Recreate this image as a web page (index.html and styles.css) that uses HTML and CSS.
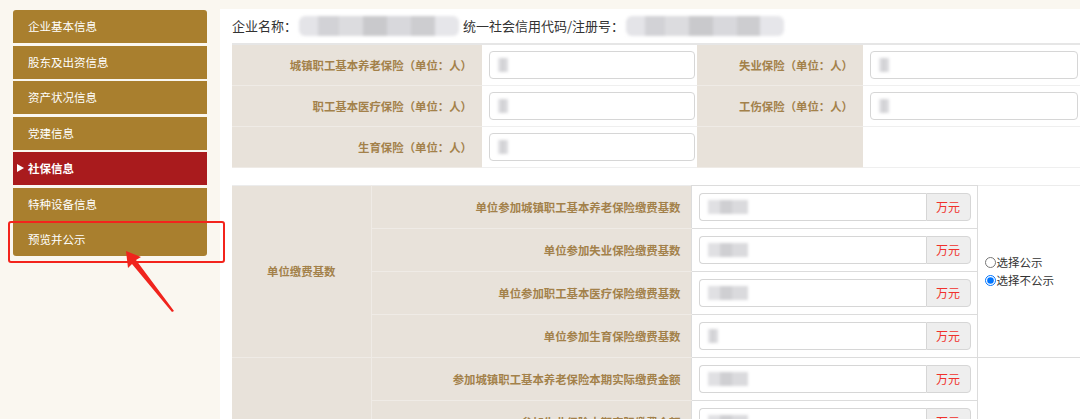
FILE: index.html
```html
<!DOCTYPE html>
<html lang="zh-CN">
<head>
    <meta charset="UTF-8">
    <title>社保信息</title>
    <link rel="stylesheet" href="styles.css">
</head>
<body>
    <div class="sidebar">
        <ul class="menu">
            <li class="menu-item first">企业基本信息</li>
            <li class="menu-item">股东及出资信息</li>
            <li class="menu-item">资产状况信息</li>
            <li class="menu-item">党建信息</li>
            <li class="menu-item active">社保信息</li>
            <li class="menu-item">特种设备信息</li>
            <li class="menu-item last">预览并公示</li>
        </ul>

        <!-- 标注 -->
        <div class="mark-box"></div>
        <svg class="mark-arrow" width="60" height="70" viewBox="0 0 60 70">
            <polygon points="4,2 19,8 14,11 52,62 50,63 10,15 6,19" fill="#f0241d"/>
        </svg>
    </div>

    <div class="main">
        <div class="company-title">
            企业名称：<span class="blur-text w1"></span>统一社会信用代码/注册号：<span class="blur-text w2"></span>
        </div>

        <table class="info-table">
            <colgroup>
                <col style="width:250px">
                <col style="width:215px">
                <col style="width:166px">
                <col>
            </colgroup>
            <tr>
                <td class="label">城镇职工基本养老保险（单位：人）</td>
                <td class="value"><div class="text-input"><span class="blur-val short"></span></div></td>
                <td class="label">失业保险（单位：人）</td>
                <td class="value"><div class="text-input"><span class="blur-val short"></span></div></td>
            </tr>
            <tr>
                <td class="label">职工基本医疗保险（单位：人）</td>
                <td class="value"><div class="text-input"><span class="blur-val short"></span></div></td>
                <td class="label">工伤保险（单位：人）</td>
                <td class="value"><div class="text-input"><span class="blur-val short"></span></div></td>
            </tr>
            <tr>
                <td class="label">生育保险（单位：人）</td>
                <td class="value"><div class="text-input"><span class="blur-val short"></span></div></td>
                <td class="label"></td>
                <td class="value"></td>
            </tr>
        </table>

        <table class="pay-table">
            <colgroup>
                <col style="width:139px">
                <col style="width:320px">
                <col style="width:286px">
                <col>
            </colgroup>
            <tr>
                <td class="label group" rowspan="4">单位缴费基数</td>
                <td class="label">单位参加城镇职工基本养老保险缴费基数</td>
                <td class="amount"><div class="input-group"><div class="text-input"><span class="blur-val"></span></div><span class="addon">万元</span></div></td>
                <td class="choice" rowspan="4">
                    <label class="radio"><input type="radio" name="pub1">选择公示</label>
                    <label class="radio"><input type="radio" name="pub1" checked>选择不公示</label>
                </td>
            </tr>
            <tr>
                <td class="label">单位参加失业保险缴费基数</td>
                <td class="amount"><div class="input-group"><div class="text-input"><span class="blur-val"></span></div><span class="addon">万元</span></div></td>
            </tr>
            <tr>
                <td class="label">单位参加职工基本医疗保险缴费基数</td>
                <td class="amount"><div class="input-group"><div class="text-input"><span class="blur-val"></span></div><span class="addon">万元</span></div></td>
            </tr>
            <tr>
                <td class="label">单位参加生育保险缴费基数</td>
                <td class="amount"><div class="input-group"><div class="text-input"><span class="blur-val short"></span></div><span class="addon">万元</span></div></td>
            </tr>
            <tr>
                <td class="label group" rowspan="2"></td>
                <td class="label">参加城镇职工基本养老保险本期实际缴费金额</td>
                <td class="amount"><div class="input-group"><div class="text-input"><span class="blur-val"></span></div><span class="addon">万元</span></div></td>
                <td class="choice" rowspan="2"></td>
            </tr>
            <tr>
                <td class="label">参加失业保险本期实际缴费金额</td>
                <td class="amount"><div class="input-group"><div class="text-input"><span class="blur-val"></span></div><span class="addon">万元</span></div></td>
            </tr>
        </table>
    </div>
</body>
</html>
```

FILE: styles.css
```css
* {
    margin: 0;
    padding: 0;
    box-sizing: border-box;
}

html, body {
    height: 419px;
    overflow: hidden;
}

body {
    display: flex;
    background-color: #faf7f0;
    font-family: "Noto Sans CJK SC", "Noto Sans", sans-serif;
}

.sidebar {
    position: relative;
    width: 220px;
    flex-shrink: 0;
    padding: 10px 13px 0 13px;
}

.menu {
    list-style: none;
}

.menu-item {
    position: relative;
    height: 33px;
    line-height: 33px;
    margin-bottom: 2.5px;
    padding-left: 15px;
    background-color: #a97f2e;
    color: #fff;
    font-size: 11.5px;
}

.menu-item.first {
    border-radius: 3px 3px 0 0;
}

.menu-item.last {
    border-radius: 0 0 3px 3px;
}

.menu-item.active {
    background-color: #a91b1d;
    font-weight: bold;
}

.menu-item.active::before {
    content: "";
    position: absolute;
    left: 4px;
    top: 12px;
    border-left: 7px solid #fff;
    border-top: 4.5px solid transparent;
    border-bottom: 4.5px solid transparent;
}

.mark-box {
    position: absolute;
    left: 8px;
    top: 221px;
    width: 217px;
    height: 42px;
    border: 2px solid #f3241c;
    border-radius: 3px;
}

.mark-arrow {
    position: absolute;
    left: 122px;
    top: 249px;
}

.main {
    flex: 1;
    margin-top: 9px;
    padding-left: 12px;
    background-color: #fff;
}

.company-title {
    height: 34px;
    line-height: 34px;
    font-size: 13px;
    color: #333;
    white-space: nowrap;
}

.blur-text {
    display: inline-block;
    height: 20px;
    vertical-align: -5px;
    border-radius: 6px;
    filter: blur(1.5px);
    background: linear-gradient(90deg, #e4e4e8 0 12%, #d2d2d6 12% 25%, #dcdcdf 25% 40%, #c9c9cc 40% 55%, #d8d8dc 55% 70%, #cdcdd0 70% 85%, #e6e6ea 85%);
}

.blur-text.w1 {
    width: 160px;
    margin: 0 4px 0 2px;
}

.blur-text.w2 {
    width: 158px;
    margin-left: 2px;
}

table {
    width: 100%;
    border-collapse: collapse;
    table-layout: fixed;
}

td.label {
    background-color: #e8e2da;
    color: #a3814a;
    font-size: 11.4px;
    font-weight: bold;
    text-align: right;
    padding-right: 10px;
    border-bottom: 1px solid #efebe6;
    white-space: nowrap;
}

.info-table {
    border-top: 2px solid #e6e6e6;
}

.info-table td {
    height: 41px;
}

.info-table td.value {
    padding: 0 2px 0 7px;
    border-bottom: 1px solid #efefef;
}

.text-input {
    height: 28px;
    background-color: #fff;
    border: 1px solid #d6d6d6;
    border-radius: 4px;
    padding: 6px 0 0 8px;
}

.blur-val {
    display: block;
    width: 40px;
    height: 14px;
    filter: blur(1.5px);
    background: linear-gradient(90deg, #e0e0e3 0 30%, #cfcfd2 30% 60%, #dadadd 60%);
}

.blur-val.short {
    width: 10px;
}

.pay-table {
    margin-top: 17px;
    border-top: 1px solid #ececec;
}

.pay-table td {
    height: 43px;
}

.pay-table td.group {
    text-align: center;
    padding-right: 0;
    border-right: 1px solid #efebe6;
}

.pay-table td.amount {
    padding: 0 6px 0 7px;
    border: 1px solid #dcdcdc;
}

.input-group {
    display: flex;
    height: 28px;
}

.input-group .text-input {
    flex: 1;
    border-radius: 4px 0 0 4px;
    border-right: none;
}

.addon {
    width: 45px;
    border: 1px solid #d6d6d6;
    border-radius: 0 4px 4px 0;
    background-color: #eeeeee;
    color: #f0312c;
    font-size: 12px;
    line-height: 26px;
    text-align: center;
}

.pay-table td.choice {
    padding-left: 7px;
    border-bottom: 1px solid #dcdcdc;
    vertical-align: middle;
}

.radio {
    display: flex;
    align-items: center;
    height: 18px;
    font-size: 11.5px;
    color: #333;
}

.radio input {
    width: 11px;
    height: 11px;
    margin: 0 1px 0 0;
}
```
